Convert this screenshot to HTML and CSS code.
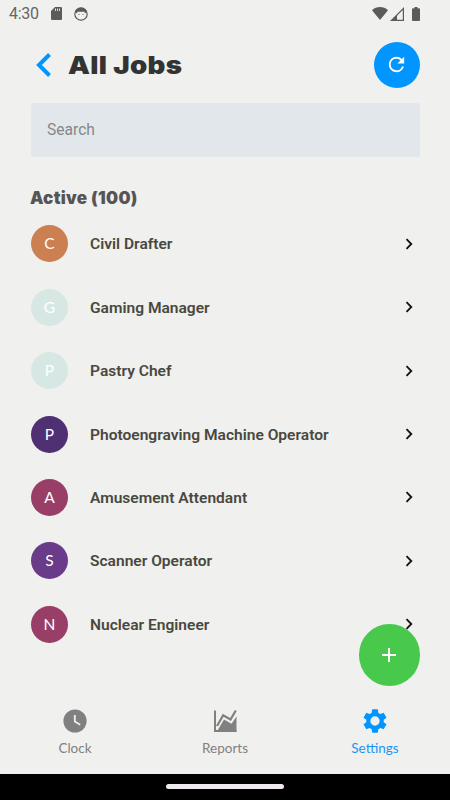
FILE: index.html
```
<!doctype html>
<html lang="en">
	<head>
		<meta charset="utf-8">
		<title>All Jobs</title>
		<link rel="stylesheet" href="styles.css">
	</head>
	<body>
		<div class="app">
			<div class="status-bar">
				<span class="time">4:30</span>
				<svg class="sd-card" width="11" height="13" viewBox="0 0 11 13"><path fill="#5b5b5b" d="M4 0h6a1 1 0 0 1 1 1v11a1 1 0 0 1-1 1H1a1 1 0 0 1-1-1V4z"/><path stroke="#ddd" stroke-width="1" d="M4.500 1.500v2.500M6.500 1.500v2.500M8.500 1.500v2.500"/></svg>
				<svg class="face" width="14" height="14" viewBox="0 0 14 14"><circle cx="7" cy="7" r="6.200" fill="none" stroke="#5b5b5b" stroke-width="1.200"/><path fill="#5b5b5b" d="M1 5.500C2 1.500 5 .7 7 .7s5 .8 6 4.800L11 6.200 10.500 4.800h-7L3 6.200z"/><circle cx="5" cy="7.300" r=".6" fill="#5b5b5b"/><circle cx="9" cy="7.300" r=".6" fill="#5b5b5b"/></svg>
				<span class="spacer"></span>
				<svg width="16" height="13" viewBox="0 0 16 13"><path fill="#5b5b5b" d="M0 3.300Q3.500 0 8 0t8 3.300L8 13z"/></svg>
				<svg class="signal" width="14" height="14" viewBox="0 0 14 14"><path fill="#5b5b5b" fill-rule="evenodd" d="M14 0v14H0zM12.800 3L7 8.800v4h5.800z"/></svg>
				<svg class="battery" width="8" height="14" viewBox="0 0 8 14"><path fill="#5b5b5b" d="M2.500 0h3v1.300H7a1 1 0 0 1 1 1V13a1 1 0 0 1-1 1H1a1 1 0 0 1-1-1V2.300a1 1 0 0 1 1-1h1.500z"/></svg>
			</div>

			<header class="header">
				<svg class="back" width="16" height="24" viewBox="0 0 16 24"><path fill="none" stroke="#0095ff" stroke-width="4" d="M13.500 1.500L3 12l10.500 10.500"/></svg>
				<h1>All Jobs</h1>
				<button class="refresh" aria-label="Refresh"><svg width="23" height="23" viewBox="0 0 24 24"><path fill="#fff" d="M17.650 6.350A7.960 7.960 0 0 0 12 4a8 8 0 1 0 7.730 10h-2.080A6 6 0 1 1 12 6c1.660 0 3.140.69 4.220 1.780L13 11h7V4z"/></svg></button>
			</header>

			<input class="search" type="text" placeholder="Search">

			<h2>Active (100)</h2>
			<ul class="jobs">
				<li><span class="avatar orange">C</span><span class="name">Civil Drafter</span><svg class="arrow" viewBox="0 0 8 12"><path d="M1.500 1.200L6.300 6l-4.800 4.800"/></svg></li>
				<li><span class="avatar mint">G</span><span class="name">Gaming Manager</span><svg class="arrow" viewBox="0 0 8 12"><path d="M1.500 1.200L6.300 6l-4.800 4.800"/></svg></li>
				<li><span class="avatar mint">P</span><span class="name">Pastry Chef</span><svg class="arrow" viewBox="0 0 8 12"><path d="M1.500 1.200L6.300 6l-4.800 4.800"/></svg></li>
				<li><span class="avatar indigo">P</span><span class="name">Photoengraving Machine Operator</span><svg class="arrow" viewBox="0 0 8 12"><path d="M1.500 1.200L6.300 6l-4.800 4.800"/></svg></li>
				<li><span class="avatar plum">A</span><span class="name">Amusement Attendant</span><svg class="arrow" viewBox="0 0 8 12"><path d="M1.500 1.200L6.300 6l-4.800 4.800"/></svg></li>
				<li><span class="avatar violet">S</span><span class="name">Scanner Operator</span><svg class="arrow" viewBox="0 0 8 12"><path d="M1.500 1.200L6.300 6l-4.800 4.800"/></svg></li>
				<li><span class="avatar plum">N</span><span class="name">Nuclear Engineer</span><svg class="arrow" viewBox="0 0 8 12"><path d="M1.500 1.200L6.300 6l-4.800 4.800"/></svg></li>
			</ul>

			<button class="add" aria-label="Add job"><svg width="14" height="14" viewBox="0 0 14 14"><path stroke="#fff" stroke-width="2" d="M7 0v14M0 7h14"/></svg></button>

			<nav class="tabs">
				<a class="tab">
					<svg width="24" height="24" viewBox="0 0 24 24"><circle cx="12" cy="12" r="11.600" fill="#808080"/><path fill="none" stroke="#f0f0ee" stroke-width="1.800" d="M11.800 6v6.500l5.400 3.200"/></svg>
					<span>Clock</span>
				</a>
				<a class="tab">
					<svg width="24" height="24" viewBox="0 0 24 24"><path fill="none" stroke="#808080" stroke-width="2" d="M2 1.500V22h21.500"/><path fill="none" stroke="#808080" stroke-width="2.200" d="M4 17l6.200-10.800 7.300 4.300L22.800 1.500"/><path fill="#808080" d="M4.500 21.500L11 10.500l7.500 4.300 5-7.300V22.500H4.500z"/></svg>
					<span>Reports</span>
				</a>
				<a class="tab active">
					<svg width="28" height="28" viewBox="0 0 24 24"><path fill="#0095ff" d="M19.430 12.980c.04-.32.070-.64.070-.98s-.03-.66-.07-.98l2.110-1.650c.19-.15.24-.42.120-.64l-2-3.460c-.12-.22-.39-.3-.61-.22l-2.490 1c-.52-.4-1.080-.73-1.690-.98l-.38-2.650A.49.49 0 0 0 14 2h-4c-.25 0-.46.18-.49.42l-.38 2.650c-.61.25-1.170.59-1.690.98l-2.490-1c-.23-.09-.49 0-.61.22l-2 3.460c-.13.22-.07.49.12.64l2.110 1.650c-.04.32-.07.65-.07.98s.03.66.07.98l-2.110 1.650c-.19.15-.24.42-.12.64l2 3.460c.12.22.39.3.61.22l2.490-1c.52.4 1.080.73 1.690.98l.38 2.650c.03.24.24.42.49.42h4c.25 0 .46-.18.49-.42l.38-2.650c.61-.25 1.170-.59 1.690-.98l2.490 1c.23.09.49 0 .61-.22l2-3.460c.12-.22.07-.49-.12-.64zM12 16a4 4 0 1 1 0-8 4 4 0 0 1 0 8z"/></svg>
					<span>Settings</span>
				</a>
			</nav>
			<div class="home-bar"><span></span></div>
		</div>
	</body>
</html>
```
FILE: styles.css
```
* {
	box-sizing: border-box;
}

body {
	margin: 0;
	background: #f0f0ee;
	font-family: Roboto, sans-serif;
}

svg {
	display: block;
	flex: none;
}

button {
	border: 0;
	padding: 0;
	border-radius: 50%;
	display: flex;
	align-items: center;
	justify-content: center;
}

.app {
	position: relative;
	display: flex;
	flex-direction: column;
	width: 450px;
	height: 800px;
	overflow: hidden;
}

.status-bar {
	display: flex;
	align-items: center;
	height: 27px;
	padding: 0 30px 0 9px;
}

.time {
	width: 42px;
	color: #666;
	font-size: 16px;
	line-height: 28px;
	letter-spacing: -.3px;
}

.face {
	margin-left: 12px;
}

.spacer {
	flex: 1;
}

.signal {
	margin-left: 2px;
}

.battery {
	margin-left: 8px;
}

.header {
	display: flex;
	align-items: center;
	height: 46px;
	margin: 14.5px 30.5px 0 36px;
}

h1 {
	flex: 1;
	margin: 0 0 0 15.5px;
	color: #333;
	font: 900 25px/46px Inter, sans-serif;
	letter-spacing: .3px;
	transform: scaleX(1.105);
	transform-origin: left;
}

.refresh {
	width: 46px;
	height: 46px;
	background: #0095ff;
}

.search {
	height: 54px;
	margin: 15.5px 30px 0 31px;
	padding: 0 16px;
	border: 0;
	border-radius: 3px;
	background: #e2e7eb;
	font: 15.600px Roboto, sans-serif;
}

.search::placeholder {
	color: #858789;
}

h2 {
	margin: 28.5px 30px 0;
	color: #555;
	font: 900 17px/24px Inter, sans-serif;
	letter-spacing: .3px;
}

.jobs {
	flex: 1;
	margin: 2.5px 37px 0 31px;
	padding: 0;
	list-style: none;
}

.jobs li {
	display: flex;
	align-items: center;
	height: 63.45px;
}

.avatar {
	width: 37px;
	height: 37px;
	border-radius: 50%;
	color: #fff;
	font: 15.500px/37px Lato, sans-serif;
	text-align: center;
}

.orange {
	background: #cc7f50;
}

.mint {
	background: #d7e8e4;
}

.indigo {
	background: #4e3073;
}

.plum {
	background: #993f67;
}

.violet {
	background: #693b88;
}

.name {
	flex: 1;
	margin-left: 22px;
	padding-top: 1px;
	color: #49483f;
	font-size: 15.550px;
	font-weight: 600;
	line-height: 20px;
}

.arrow {
	width: 8px;
	height: 12px;
}

.arrow path {
	fill: none;
	stroke: #111;
	stroke-width: 1.8;
}

/* floats over the end of the list */
.add {
	position: absolute;
	right: 30px;
	bottom: 114.5px;
	width: 61.5px;
	height: 61.5px;
	background: #48c94c;
}

.tabs {
	display: flex;
	height: 76px;
}

.tab {
	flex: 1;
	display: flex;
	flex-direction: column;
	align-items: center;
	color: #808080;
	font: 13.5px/18px Lato, sans-serif;
}

.tab svg {
	height: 28px;
	margin: 9px 0 4px;
}

.active {
	color: #1e95f2;
}

.home-bar {
	display: flex;
	justify-content: center;
	height: 26px;
	padding-top: 10px;
	background: #000;
}

.home-bar span {
	width: 118px;
	height: 5px;
	border-radius: 3px;
	background: #eee9ee;
}
```
